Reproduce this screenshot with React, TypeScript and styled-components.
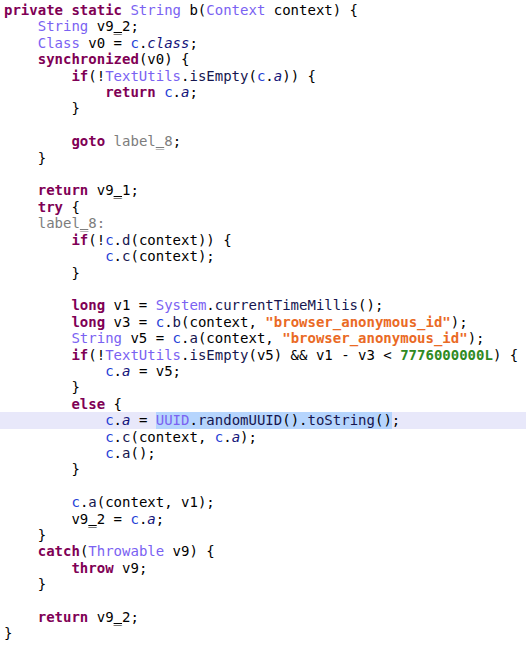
import React from "react";
import styled, { createGlobalStyle } from "styled-components";

const Global = createGlobalStyle`
  html, body { margin: 0; padding: 0; background: #ffffff; }
`;

type Kind = "kw" | "type" | "cls" | "field" | "method" | "str" | "num" | "label" | "plain";

const colors: Record<Kind, string> = {
  kw: "#7f0055",
  type: "#7a62f2",
  cls: "#1f3fd6",
  field: "#14147a",
  method: "#16164f",
  str: "#ea6a25",
  num: "#2f8a22",
  label: "#7d7d7d",
  plain: "#000000",
};

const isBold = (k: Kind) => k === "kw" || k === "str" || k === "num";

const Editor = styled.div`
  background: #ffffff;
  padding: 2px 0 0 0;
  font-family: "DejaVu Sans Mono", "Liberation Mono", monospace;
  font-size: 14px;
  width: 526px;
  height: 648px;
  overflow: hidden;
`;

const Line = styled.div<{ $current?: boolean }>`
  display: flex;
  align-items: center;
  height: 16.42px;
  line-height: 18px;
  padding-left: 4px;
  white-space: pre;
  background: ${(p) => (p.$current ? "#e8e8fa" : "transparent")};
`;

const Tok = styled.span<{ $k: Kind; $sel?: boolean }>`
  color: ${(p) => colors[p.$k]};
  font-weight: ${(p) => (isBold(p.$k) ? 700 : 400)};
  font-style: ${(p) => (p.$k === "field" ? "italic" : "normal")};
  background: ${(p) => (p.$sel ? "#b6d5fd" : "transparent")};
  line-height: 16.42px;
  height: 16.42px;
  display: inline-block;
`;

const Under = styled.span`
  text-decoration: underline;
  text-decoration-thickness: 1px;
  text-underline-offset: 1px;
`;

type T = [Kind, string, boolean?];

const P = (s: string): T => ["plain", s];
const K = (s: string): T => ["kw", s];
const Ty = (s: string): T => ["type", s];
const C = (s: string): T => ["cls", s];
const F = (s: string): T => ["field", s];
const M = (s: string): T => ["method", s];
const S = (s: string): T => ["str", s];
const N = (s: string): T => ["num", s];
const L = (s: string): T => ["label", s];

const ind = (n: number): T => P(" ".repeat(n * 4));

const lines: T[][] = [
  [K("private static "), Ty("String"), P(" b("), Ty("Context"), P(" context) {")],
  [ind(1), Ty("String"), P(" v9_2;")],
  [ind(1), Ty("Class"), P(" v0 = "), C("c"), P("."), F("class"), P(";")],
  [ind(1), K("synchronized"), P("(v0) {")],
  [ind(2), K("if"), P("(!"), Ty("TextUtils"), P("."), M("isEmpty"), P("("), C("c"), P("."), F("a"), P(")) {")],
  [ind(3), K("return "), C("c"), P("."), F("a"), P(";")],
  [ind(2), P("}")],
  [],
  [ind(2), K("goto "), L("label_8"), P(";")],
  [ind(1), P("}")],
  [],
  [ind(1), K("return "), P("v9_1;")],
  [ind(1), K("try"), P(" {")],
  [ind(1), L("label_8:")],
  [ind(2), K("if"), P("(!"), C("c"), P("."), M("d"), P("(context)) {")],
  [ind(3), C("c"), P("."), M("c"), P("(context);")],
  [ind(2), P("}")],
  [],
  [ind(2), K("long"), P(" v1 = "), Ty("System"), P("."), M("currentTimeMillis"), P("();")],
  [ind(2), K("long"), P(" v3 = "), C("c"), P("."), M("b"), P("(context, "), S("\"browser_anonymous_id\""), P(");")],
  [ind(2), Ty("String"), P(" v5 = "), C("c"), P("."), M("a"), P("(context, "), S("\"browser_anonymous_id\""), P(");")],
  [ind(2), K("if"), P("(!"), Ty("TextUtils"), P("."), M("isEmpty"), P("(v5) && v1 - v3 < "), N("7776000000L"), P(") {")],
  [ind(3), C("c"), P("."), F("a"), P(" = v5;")],
  [ind(2), P("}")],
  [ind(2), K("else"), P(" {")],
  [
    ind(3),
    C("c"),
    P("."),
    F("a"),
    P(" = "),
    ["type", "UUID", true],
    ["plain", ".", true],
    ["method", "randomUUID", true],
    ["plain", "().", true],
    ["method", "toString", true],
    ["plain", "()", true],
    P(";"),
  ],
  [ind(3), C("c"), P("."), M("c"), P("(context, "), C("c"), P("."), F("a"), P(");")],
  [ind(3), C("c"), P("."), M("a"), P("();")],
  [ind(2), P("}")],
  [],
  [ind(2), C("c"), P("."), M("a"), P("(context, v1);")],
  [ind(2), P("v9_2 = "), C("c"), P("."), F("a"), P(";")],
  [ind(1), P("}")],
  [ind(1), K("catch"), P("("), Ty("Throwable"), P(" v9) {")],
  [ind(2), K("throw"), P(" v9;")],
  [ind(1), P("}")],
  [],
  [ind(1), K("return"), P(" v9_2;")],
  [P("}")],
];

const CURRENT = 25;

function renderText(k: Kind, s: string) {
  if (isBold(k) || !s.includes("_")) return s;
  const parts = s.split("_");
  const out: React.ReactNode[] = [];
  parts.forEach((part, i) => {
    if (i > 0) out.push(<Under key={"u" + i}>_</Under>);
    if (part) out.push(part);
  });
  return out;
}

export default function App() {
  return (
    <>
      <Global />
      <Editor>
        {lines.map((toks, i) => (
          <Line key={i} $current={i === CURRENT}>
            {toks.map(([k, s, sel], j) => (
              <Tok key={j} $k={k} $sel={!!sel}>
                {renderText(k, s)}
              </Tok>
            ))}
          </Line>
        ))}
      </Editor>
    </>
  );
}
